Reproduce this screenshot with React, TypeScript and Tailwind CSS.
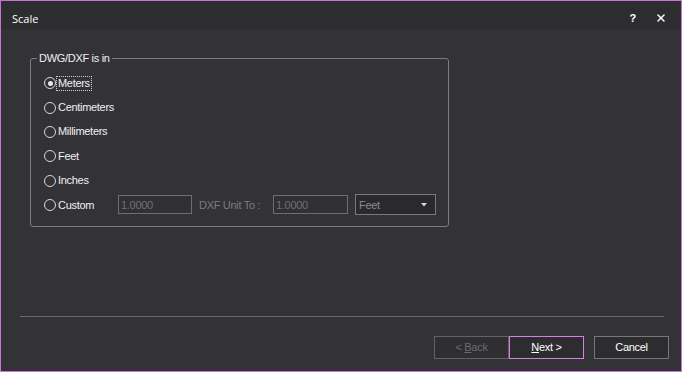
import React from 'react';
import { X } from 'lucide-react';

const units = ['Meters', 'Centimeters', 'Millimeters', 'Feet', 'Inches'];

const Radio: React.FC<{ checked?: boolean }> = ({ checked }) => (
    <span className="w-[12px] h-[12px] rounded-full border border-[#d8d8d8] flex items-center justify-center shrink-0">
        {checked && <span className="w-[5px] h-[5px] rounded-full bg-[#e8e8e8]" />}
    </span>
);

export default function App() {
    return (
        <div
            className="w-[682px] h-[372px] border border-[#c873d6] bg-[#333337] flex flex-col text-[#f0f0f0] text-[11px] tracking-[-0.3px]"
            style={{ fontFamily: '"Liberation Sans", Arial, sans-serif' }}
        >
            {/* Title bar */}
            <div className="h-[28px] bg-[#2d2d30] flex items-start pt-[12px] pl-[11px] pr-[14px] shrink-0">
                <span className="text-[11px] tracking-normal text-white leading-none" style={{ fontFamily: '"Open Sans", sans-serif' }}>Scale</span>
                <span className="ml-auto text-[11px] font-bold text-white leading-none mr-[19px]">?</span>
                <X className="w-[12px] h-[12px] text-white -mt-[1px]" strokeWidth={3} />
            </div>

            {/* Body */}
            <div className="flex-1 flex flex-col px-[18px]">
                <div className="relative mt-[29px] ml-[11px] w-[419px] h-[169px] border border-[#7d7d7d] rounded-[3px] pt-[12px] pl-[13px]">
                    <span className="absolute -top-[8px] left-[6px] px-[2px] bg-[#333337] leading-[14px]">DWG/DXF is in</span>

                    {units.map((u, i) => (
                        <div key={u} className="h-[24.4px] flex items-center">
                            <Radio checked={i === 0} />
                            <span className={`ml-[1px] px-[1px] leading-[13px] ${i === 0 ? 'outline outline-1 outline-dotted outline-[#d0d0d0]' : ''}`}>{u}</span>
                        </div>
                    ))}

                    <div className="h-[24px] flex items-center">
                        <Radio />
                        <span className="ml-[2px] w-[60px]">Custom</span>
                        <div className="w-[74px] h-[19px] border border-[#6e6e6e] bg-[#313134] flex items-center px-[2px] text-[#707070]">1.0000</div>
                        <span className="ml-[7px] w-[74px] text-[#7c7c7c]">DXF Unit To :</span>
                        <div className="w-[75px] h-[19px] border border-[#6e6e6e] bg-[#313134] flex items-center px-[2px] text-[#707070]">1.0000</div>
                        <div className="ml-[7px] w-[81px] h-[21px] border border-[#7a7a7a] bg-[#2a2a2c] flex items-center pl-[3px] pr-[8px] text-[#8a8a8a]">
                            Feet
                            <svg className="ml-auto" width="6" height="4" viewBox="0 0 6 4"><path d="M0 0H6L3 3.5Z" fill="#d8d8d8" /></svg>
                        </div>
                    </div>
                </div>

                <div className="flex-1" />
                <div className="h-[1px] bg-[#6a6a6a] w-[644px] ml-[1px]" />

                <div className="flex mt-[19px] mb-[12px] mr-[-6px] justify-end">
                    <button className="w-[75px] h-[23px] border border-[#626262] bg-[#2f2f32] text-[#6c6c6c]">
                        &lt; <span className="underline">B</span>ack
                    </button>
                    <button className="w-[75px] h-[23px] border border-[#d87ee6] bg-[#2d2d30] text-white">
                        <span className="underline">N</span>ext &gt;
                    </button>
                    <button className="ml-[10px] w-[75px] h-[23px] border border-[#777777] bg-[#2d2d30] text-white">Cancel</button>
                </div>
            </div>
        </div>
    );
}
